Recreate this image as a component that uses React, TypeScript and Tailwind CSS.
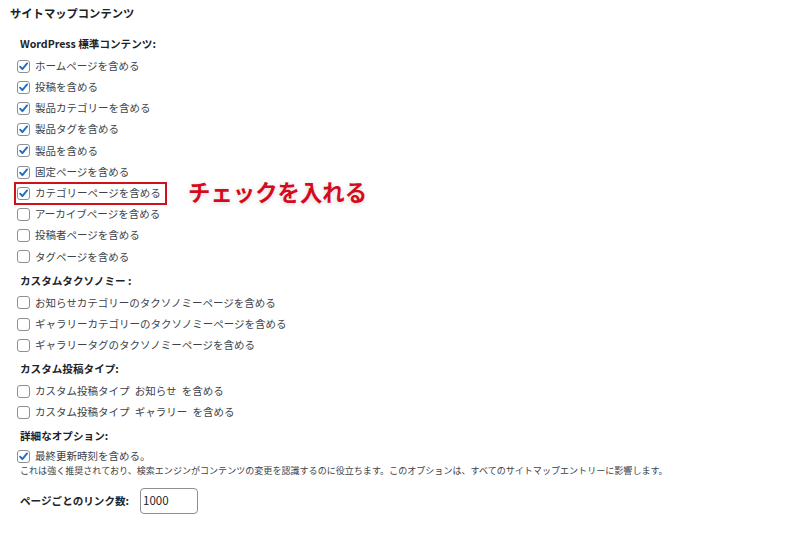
import React from "react";

type Item = { label: string; checked: boolean; highlight?: boolean };

const Check = ({ checked }: { checked: boolean }) => (
  <span className="flex h-[13px] w-[13px] shrink-0 items-center justify-center rounded-[3px] border border-[#8c8f94] bg-white">
    {checked && (
      <svg viewBox="0 0 12 12" className="h-[11px] w-[11px]">
        <path d="M2.3 6.2 L4.8 8.9 L9.9 2.7" fill="none" stroke="#1f6fc0" strokeWidth="2.1" strokeLinecap="round" strokeLinejoin="round" />
      </svg>
    )}
  </span>
);

const Row = ({ item }: { item: Item }) => (
  <div className="relative flex h-[21.2px] items-center gap-[5px] pl-[7px]">
    <Check checked={item.checked} />
    <span className="whitespace-pre text-[10.5px] leading-none text-[#3c434a]">{item.label}</span>
    {item.highlight && (
      <>
        <span className="pointer-events-none absolute left-[4px] top-[-1px] h-[23.5px] w-[153px] border-2 border-[#d0101b]" />
        <span className="absolute left-[178px] top-[-3px] whitespace-nowrap text-[22.4px] font-bold leading-none text-[#d40b1b] [text-shadow:0_0_3px_#fff,0_1px_4px_rgba(0,0,0,0.22)]">
          チェックを入れる
        </span>
      </>
    )}
  </div>
);

const Heading = ({ children, className = "" }: { children: React.ReactNode; className?: string }) => (
  <div className={`flex h-[22px] items-center pl-[10px] text-[10.6px] font-bold leading-none text-[#1d2327] ${className}`}>{children}</div>
);

const standard: Item[] = [
  { label: "ホームページを含める", checked: true },
  { label: "投稿を含める", checked: true },
  { label: "製品カテゴリーを含める", checked: true },
  { label: "製品タグを含める", checked: true },
  { label: "製品を含める", checked: true },
  { label: "固定ページを含める", checked: true },
  { label: "カテゴリーページを含める", checked: true, highlight: true },
  { label: "アーカイブページを含める", checked: false },
  { label: "投稿者ページを含める", checked: false },
  { label: "タグページを含める", checked: false },
];

const taxonomy: Item[] = [
  { label: "お知らせカテゴリーのタクソノミーページを含める", checked: false },
  { label: "ギャラリーカテゴリーのタクソノミーページを含める", checked: false },
  { label: "ギャラリータグのタクソノミーページを含める", checked: false },
];

const postTypes: Item[] = [
  { label: "カスタム投稿タイプ\u2002お知らせ\u2002を含める", checked: false },
  { label: "カスタム投稿タイプ\u2002ギャラリー\u2002を含める", checked: false },
];

export default function App() {
  return (
    <div className="h-[547px] w-[790px] overflow-hidden bg-white px-[10px] font-['Noto_Sans_CJK_JP','Noto_Sans',sans-serif]">
      <div className="mt-[6px] flex h-[16px] items-center text-[11.3px] font-bold leading-none text-[#1d2327]">
        サイトマップコンテンツ
      </div>

      <Heading className="mt-[11.5px]">WordPress 標準コンテンツ:</Heading>
      {standard.map((it) => (
        <Row key={it.label} item={it} />
      ))}

      <Heading className="mt-[3px]">カスタムタクソノミー :</Heading>
      {taxonomy.map((it) => (
        <Row key={it.label} item={it} />
      ))}

      <Heading className="mt-[2.5px]">カスタム投稿タイプ:</Heading>
      {postTypes.map((it) => (
        <Row key={it.label} item={it} />
      ))}

      <Heading className="mt-[2.5px]">詳細なオプション:</Heading>
      <div className="mt-[-1.5px]">
        <Row item={{ label: "最終更新時刻を含める。", checked: true }} />
      </div>
      <div className="mt-[-2px] flex h-[12px] items-center pl-[10px] text-[9.05px] leading-none text-[#3c434a]">
        これは強く推奨されており、検索エンジンがコンテンツの変更を認識するのに役立ちます。このオプションは、すべてのサイトマップエントリーに影響します。
      </div>

      <div className="mt-[11px] flex items-center pl-[10px]">
        <span className="w-[120px] text-[10.6px] font-bold leading-none text-[#1d2327]">ページごとのリンク数:</span>
        <div className="flex h-[26px] w-[58px] items-center rounded-[4px] border border-[#8c8f94] bg-white pl-[2px] text-[11.5px] text-[#1d2327]">
          1000
        </div>
      </div>
    </div>
  );
}
